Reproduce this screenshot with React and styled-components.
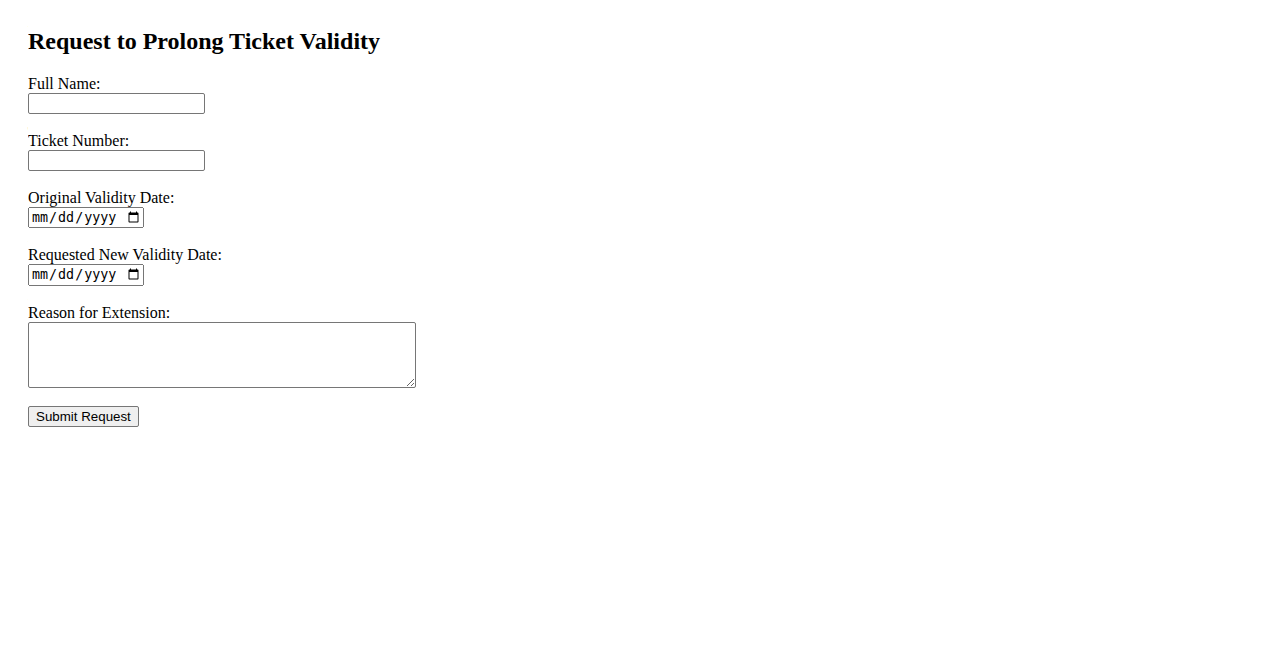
import React from "react";
import styled, { createGlobalStyle } from "styled-components";

const GlobalStyle = createGlobalStyle`
  body {
    margin: 8px;
    font-family: "Liberation Serif", "Times New Roman", serif;
    font-size: 16px;
    color: #000;
    background: #fff;
  }
`;

const Page = styled.div`
  padding: 0 20px 20px;
`;

const Title = styled.h2`
  font-family: "Liberation Serif", "Times New Roman", serif;
  font-size: 24px;
  font-weight: bold;
  margin: 20px 0 20px;
`;

const Form = styled.form`
  margin: 0;
`;

const Label = styled.label`
  font-size: 16px;
`;

const TextInput = styled.input`
  box-sizing: border-box;
  width: 177px;
  height: 21px;
  font-family: "Liberation Sans", Arial, sans-serif;
  font-size: 13.33px;
  border: 1px solid #767676;
  border-radius: 2px;
  padding: 1px 2px;
`;

const DateInput = styled.input`
  box-sizing: border-box;
  width: 116px;
  font-size: 13.33px;
`;

const TextArea = styled.textarea`
  box-sizing: border-box;
  width: 388px;
  height: 66px;
  vertical-align: bottom;
  border: 1px solid #767676;
  border-radius: 2px;
`;

const Button = styled.button`
  box-sizing: border-box;
  height: 21px;
  font-family: "Liberation Sans", Arial, sans-serif;
  font-size: 13.33px;
  padding: 1px 7px;
  background: #efefef;
  border: 1px solid #767676;
  border-radius: 2px;
  color: #000;
`;

export default function App() {
  return (
    <>
      <GlobalStyle />
      <Page>
        <Title>Request to Prolong Ticket Validity</Title>
        <Form onSubmit={(e) => e.preventDefault()}>
          <Label htmlFor="name">Full Name:</Label>
          <br />
          <TextInput type="text" id="name" name="name" />
          <br />
          <br />
          <Label htmlFor="ticket">Ticket Number:</Label>
          <br />
          <TextInput type="text" id="ticket" name="ticket" />
          <br />
          <br />
          <Label htmlFor="orig">Original Validity Date:</Label>
          <br />
          <DateInput type="date" id="orig" name="orig" />
          <br />
          <br />
          <Label htmlFor="new">Requested New Validity Date:</Label>
          <br />
          <DateInput type="date" id="new" name="new" />
          <br />
          <br />
          <Label htmlFor="reason">Reason for Extension:</Label>
          <br />
          <TextArea id="reason" name="reason" />
          <br />
          <br />
          <Button type="submit">Submit Request</Button>
        </Form>
      </Page>
    </>
  );
}
